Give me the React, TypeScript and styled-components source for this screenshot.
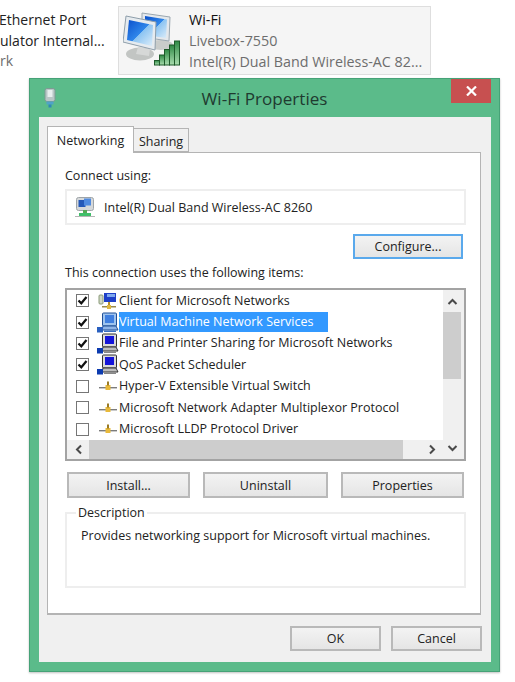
import React from "react";
import styled, { createGlobalStyle } from "styled-components";

const Global = createGlobalStyle`
  html, body { margin: 0; padding: 0; background: #fff; }
  * { box-sizing: border-box; }
  body { font-family: "Open Sans", "Noto Sans", "Liberation Sans", sans-serif; color: #1a1a1a; }
`;

const Page = styled.div`
  width: 515px; height: 682px; overflow: hidden; display: flex; flex-direction: column;
  padding-top: 6px;
`;
const TileRow = styled.div`display: flex; height: 69px; flex: none;`;
const CutTile = styled.div`
  width: 118px; overflow: hidden; padding: 4px 0 0 0; font-size: 14px; line-height: 20.5px; white-space: nowrap; color: #222;
`;
const TileLine = styled.div<{ $muted?: boolean; $indent?: number }>`
  margin-left: ${p => p.$indent ?? 0}px;
  color: ${p => (p.$muted ? "#6d6d6d" : "inherit")};
`;
const Tile = styled.div`
  width: 313px; border: 1px solid #dedede; background: #f5f5f5; display: flex; padding: 4px 0 0 4px;
`;
const TileText = styled.div`
  margin: -2px 0 0 6px; font-size: 14.3px; line-height: 21px; white-space: nowrap; color: #6d6d6d;
`;
const TileName = styled.div`color: #111;`;

const Window = styled.div`
  margin: 3px 0 0 29px; width: 471px; height: 594px; background: #5bbb8a; border: 1px solid #46a277;
  box-shadow: 0 1px 2px rgba(0,0,0,.25); padding: 0 8px 9px 9px; display: flex; flex-direction: column; flex: none;
`;
const TitleBar = styled.div`
  height: 38px; display: flex; align-items: center; position: relative; flex: none;
  justify-content: center;
`;
const TitleIcon = styled.div`position: absolute; left: 5px; top: 9px; display: flex;`;
const Title = styled.div`font-size: 17.1px; color: #1f3a30; margin: 1px 0 0 -1px;`;
const Close = styled.div`
  position: absolute; right: 0; top: 0; width: 40px; height: 24px; background: #c75050;
  display: flex; align-items: center; justify-content: center;
`;
const Client = styled.div`
  flex: 1; background: #f0f0f0; padding: 9px 10px 0 8px; display: flex; flex-direction: column;
  font-size: 12.5px;
`;
const TabStrip = styled.div`display: flex; align-items: flex-end; height: 26px; position: relative; z-index: 1; flex: none;`;
const Tab = styled.div<{ $active?: boolean }>`
  height: ${p => (p.$active ? 27 : 24)}px; margin-bottom: ${p => (p.$active ? -1 : 0)}px;
  width: ${p => (p.$active ? 87 : 55)}px;
  background: ${p => (p.$active ? "#fff" : "#f0f0f0")};
  border: 1px solid #b4b4b4; border-bottom: ${p => (p.$active ? "none" : "1px solid #b4b4b4")};
  border-left: ${p => (p.$active ? "1px solid #b4b4b4" : "none")};
  color: #222; display: flex; align-items: center; justify-content: center;
  padding-top: ${p => (p.$active ? 0 : 2)}px;
`;
const Panel = styled.div`
  height: 463px; flex: none; background: #fff; border: 1px solid #b4b4b4; border-bottom-width: 2px;
  padding: 14px 14px 0 17px; display: flex; flex-direction: column;
`;
const Label = styled.div`height: 16px; line-height: 16px; color: #222; margin-top: 1px; margin-bottom: -1px;`;
const AdapterBox = styled.div`
  margin-top: 6px; height: 36px; border: 2px solid #eee; display: flex; align-items: center; padding-left: 8px; gap: 9px;
  color: #222;
`;
const Btn = styled.div<{ $focus?: boolean }>`
  border: 2px solid ${p => (p.$focus ? "#5aa9ec" : "#b9b9b9")};
  background: linear-gradient(#f3f3f3, #e5e5e5);
  display: flex; align-items: center; justify-content: center; color: #222; font-size: 12.5px;
`;
const ConfigureBtn = styled(Btn)`margin: 9px 3px 0 auto; width: 110px; height: 25px; flex: none;`;
const LabelSpaced = styled(Label)`margin-top: 6px;`;
const ListBox = styled.div`
  margin-top: 8px; height: 173px; flex: none; border: 2px solid #a3a3a3; background: #fff; display: grid;
  grid-template-columns: 376px 1fr; grid-template-rows: 150px 1fr;
`;
const Items = styled.div`overflow: hidden;`;
const Row = styled.div`height: 21.4px; display: flex; align-items: center; padding-left: 9px; white-space: nowrap;`;
const Check = styled.div`
  width: 13px; height: 13px; border: 1px solid #767676; background: #fff; display: flex; align-items: center; justify-content: center; flex: none;
`;
const RowIcon = styled.div`width: 22px; margin-left: 8px; height: 21px; display: flex; align-items: center; justify-content: center; flex: none;`;
const RowText = styled.div<{ $selected?: boolean }>`
  height: 20px; line-height: 19px; color: ${p => (p.$selected ? "#fff" : "#222")};
  background: ${p => (p.$selected ? "#3399ff" : "transparent")};
  width: ${p => (p.$selected ? "209px" : "auto")};
`;
const VScroll = styled.div`
  grid-column: 2; grid-row: 1 / span 2; background: #f0f0f0; display: flex; flex-direction: column; padding-right: 3px;
`;
const HScroll = styled.div`grid-column: 1; grid-row: 2; background: #f0f0f0; display: flex;`;
const Arrow = styled.div<{ $size: number }>`
  flex: none; width: ${p => p.$size}px; height: ${p => p.$size}px; display: flex; align-items: center; justify-content: center;
`;
const VArrow = styled(Arrow)`width: 100%;`;
const HArrow = styled(Arrow)`height: 100%;`;
const VThumb = styled.div`height: 67px; background: #cdcdcd; flex: none;`;
const HThumb = styled.div`width: 314px; background: #cdcdcd; flex: none;`;
const Spacer = styled.div`flex: 1;`;
const ButtonRow = styled.div`
  margin: 11px 1px 0 2px; display: grid; grid-template-columns: 123px 125px 123px; gap: 13px; height: 26px; flex: none;
`;
const Group = styled.div`
  position: relative; margin-top: 14px; height: 76px; border: 2px solid #eee; padding: 13px 0 0 14px; color: #222; flex: none;
`;
const Legend = styled.div`position: absolute; left: 9px; top: -9px; background: #fff; padding: 0 2px; line-height: 16px;`;
const Footer = styled.div`
  display: flex; justify-content: flex-end; gap: 10px; padding: 11px 0 0; margin-right: -1px;
`;
const FootBtn = styled(Btn)`width: 91px; height: 25px;`;

const Chevron = ({ d }: { d: string }) => (
  <svg width="11" height="11" viewBox="0 0 11 11"><path d={d} fill="none" stroke="#4a4a4a" strokeWidth="2" /></svg>
);
const CheckMark = () => (
  <svg width="11" height="11" viewBox="0 0 11 11"><path d="M1.5 5.5 L4.3 8.3 L9.5 2" fill="none" stroke="#111" strokeWidth="2.2" /></svg>
);
const CloseX = () => (
  <svg width="11" height="10" viewBox="0 0 11 10"><path d="M1 0.5 L10 9.5 M10 0.5 L1 9.5" stroke="#fff" strokeWidth="2.2" /></svg>
);
const UsbIcon = () => (
  <svg width="12" height="20" viewBox="0 0 12 20">
    <rect x="1" y="0.5" width="10" height="13" rx="2" fill="#b9c6c6" stroke="#7e9a94" />
    <rect x="3.5" y="2" width="5" height="7" fill="#e8eeee" />
    <rect x="2.5" y="13.5" width="7" height="3" fill="#4fa3c8" />
    <rect x="4.5" y="16.5" width="3" height="3" fill="#2f87b8" />
  </svg>
);
const NetMonitors = () => (
  <svg width="60" height="56" viewBox="0 0 60 56">
    <defs>
      <linearGradient id="scr" x1="0" y1="0" x2="1" y2="1">
        <stop offset="0" stopColor="#0a50cc" /><stop offset=".5" stopColor="#2f86ea" /><stop offset=".52" stopColor="#8cc4f2" /><stop offset="1" stopColor="#dcedf9" />
      </linearGradient>
      <linearGradient id="bar" x1="0" y1="0" x2="0" y2="1">
        <stop offset="0" stopColor="#2f8a45" /><stop offset="1" stopColor="#a9dcae" />
      </linearGradient>
    </defs>
    <ellipse cx="38" cy="34" rx="12" ry="5" fill="#c9ccca" />
    <path d="M19 2 L47 6 L46 30 L19 26 Z" fill="#e4e8ec" stroke="#9aa7b0" />
    <path d="M22 5 L44 8.5 L43 27 L22 24 Z" fill="url(#scr)" />
    <ellipse cx="17" cy="43" rx="14" ry="6.5" fill="#c2c5c3" />
    <path d="M15 36 L27 38 L26 45 L13 43 Z" fill="#d6d8d7" />
    <path d="M3 5 L33 11 L32 39 L0 31 Z" fill="#e6ebef" stroke="#8e9eaa" />
    <path d="M6 9 L30 14 L29 35 L4 29 Z" fill="url(#scr)" />
    <g fill="url(#bar)" stroke="#1e5a2a" strokeWidth="1">
      <rect x="31.5" y="49.5" width="5" height="4.5" />
      <rect x="36.5" y="44" width="5" height="10" />
      <rect x="41.5" y="38.5" width="5" height="15.5" />
      <rect x="46.5" y="34" width="5" height="20" />
      <rect x="51.5" y="30" width="5" height="24" />
    </g>
  </svg>
);
const AdapterIcon = () => (
  <svg width="20" height="22" viewBox="0 0 20 22">
    <rect x="1.5" y="1.5" width="17" height="13" rx="2" fill="#d5d8da" stroke="#9ea4a8" />
    <rect x="3.5" y="4" width="7" height="7" fill="#2458b8" />
    <rect x="9" y="2.5" width="7" height="7" fill="#4f8ae0" />
    <rect x="8" y="14" width="4" height="3" fill="#5a5" />
    <rect x="4" y="17" width="12" height="3" fill="#3fbf6a" />
    <rect x="0" y="20" width="20" height="1" fill="#b5b5b5" />
  </svg>
);
const ClientIcon = () => (
  <svg width="20" height="18" viewBox="0 0 20 18">
    <rect x="1" y="3" width="4" height="9" rx="1" fill="#cfd6c6" stroke="#8a9a78" />
    <rect x="6" y="1" width="12" height="9" fill="#1e3fc8" />
    <rect x="9" y="2" width="8" height="3" fill="#7fa8ee" />
    <rect x="10" y="10" width="2" height="4" fill="#b8912e" />
    <rect x="4" y="14" width="14" height="1.5" fill="#9a8a4a" />
    <rect x="9" y="13" width="4" height="4" fill="#e0b840" />
  </svg>
);
const PcIcon = ({ selected }: { selected?: boolean }) => (
  <svg width="22" height="21" viewBox="0 0 22 21">
    <rect x="5.5" y="1" width="14" height="13" rx="1" fill={selected ? "#9fc4ee" : "#d9d9d9"} stroke={selected ? "#1f4f96" : "#333"} />
    <rect x="8" y="3" width="9" height="8" fill={selected ? "#3f7fe0" : "#1414d8"} />
    <path d="M6 14 H19 L21 18 H5 Z" fill={selected ? "#8fb4e6" : "#bdbdbd"} stroke={selected ? "#1f4f96" : "#333"} />
    <rect x="0" y="15" width="6" height="5.5" fill={selected ? "#2a60c0" : "#0c3bb0"} />
    <rect x="7" y="18.5" width="12" height="1.5" fill={selected ? "#3a6fc0" : "#888"} />
  </svg>
);
const ProtoIcon = () => (
  <svg width="18" height="12" viewBox="0 0 18 12">
    <rect x="0" y="7" width="18" height="1.4" fill="#7c7c7c" />
    <rect x="6.5" y="5" width="5" height="5" fill="#e8b93a" />
    <rect x="8" y="1.5" width="2" height="4" fill="#9a7b25" />
  </svg>
);

type Item = { label: string; checked?: boolean; icon: React.ReactNode; selected?: boolean };
const items: Item[] = [
  { label: "Client for Microsoft Networks", checked: true, icon: <ClientIcon /> },
  { label: "Virtual Machine Network Services", checked: true, icon: <PcIcon selected />, selected: true },
  { label: "File and Printer Sharing for Microsoft Networks", checked: true, icon: <PcIcon /> },
  { label: "QoS Packet Scheduler", checked: true, icon: <PcIcon /> },
  { label: "Hyper-V Extensible Virtual Switch", icon: <ProtoIcon /> },
  { label: "Microsoft Network Adapter Multiplexor Protocol", icon: <ProtoIcon /> },
  { label: "Microsoft LLDP Protocol Driver", icon: <ProtoIcon /> },
];

export default function App() {
  return (
    <>
      <Global />
      <Page>
        <TileRow>
          <CutTile>
            <TileLine $indent={-1}>Ethernet Port</TileLine>
            <TileLine>ulator Internal...</TileLine>
            <TileLine $muted>rk</TileLine>
          </CutTile>
          <Tile>
            <NetMonitors />
            <TileText>
              <TileName>Wi-Fi</TileName>
              <div>Livebox-7550</div>
              <div>Intel(R) Dual Band Wireless-AC 82...</div>
            </TileText>
          </Tile>
        </TileRow>
        <Window>
          <TitleBar>
            <TitleIcon><UsbIcon /></TitleIcon>
            <Title>Wi-Fi Properties</Title>
            <Close><CloseX /></Close>
          </TitleBar>
          <Client>
            <TabStrip>
              <Tab $active>Networking</Tab>
              <Tab>Sharing</Tab>
            </TabStrip>
            <Panel>
              <Label>Connect using:</Label>
              <AdapterBox><AdapterIcon />Intel(R) Dual Band Wireless-AC 8260</AdapterBox>
              <ConfigureBtn $focus>Configure...</ConfigureBtn>
              <LabelSpaced>This connection uses the following items:</LabelSpaced>
              <ListBox>
                <Items>
                  {items.map(it => (
                    <Row key={it.label}>
                      <Check>{it.checked && <CheckMark />}</Check>
                      <RowIcon>{it.icon}</RowIcon>
                      <RowText $selected={it.selected}>{it.label}</RowText>
                    </Row>
                  ))}
                </Items>
                <VScroll>
                  <VArrow $size={22}><Chevron d="M1.5 8 L5.5 4 L9.5 8" /></VArrow>
                  <VThumb />
                  <Spacer />
                  <VArrow $size={22}><Chevron d="M1.5 3 L5.5 7 L9.5 3" /></VArrow>
                </VScroll>
                <HScroll>
                  <HArrow $size={22}><Chevron d="M8 1.5 L4 5.5 L8 9.5" /></HArrow>
                  <HThumb />
                  <Spacer />
                  <HArrow $size={22}><Chevron d="M3 1.5 L7 5.5 L3 9.5" /></HArrow>
                </HScroll>
              </ListBox>
              <ButtonRow>
                <Btn>Install...</Btn>
                <Btn>Uninstall</Btn>
                <Btn>Properties</Btn>
              </ButtonRow>
              <Group>
                <Legend>Description</Legend>
                Provides networking support for Microsoft virtual machines.
              </Group>
            </Panel>
            <Footer>
              <FootBtn>OK</FootBtn>
              <FootBtn>Cancel</FootBtn>
            </Footer>
          </Client>
        </Window>
      </Page>
    </>
  );
}
